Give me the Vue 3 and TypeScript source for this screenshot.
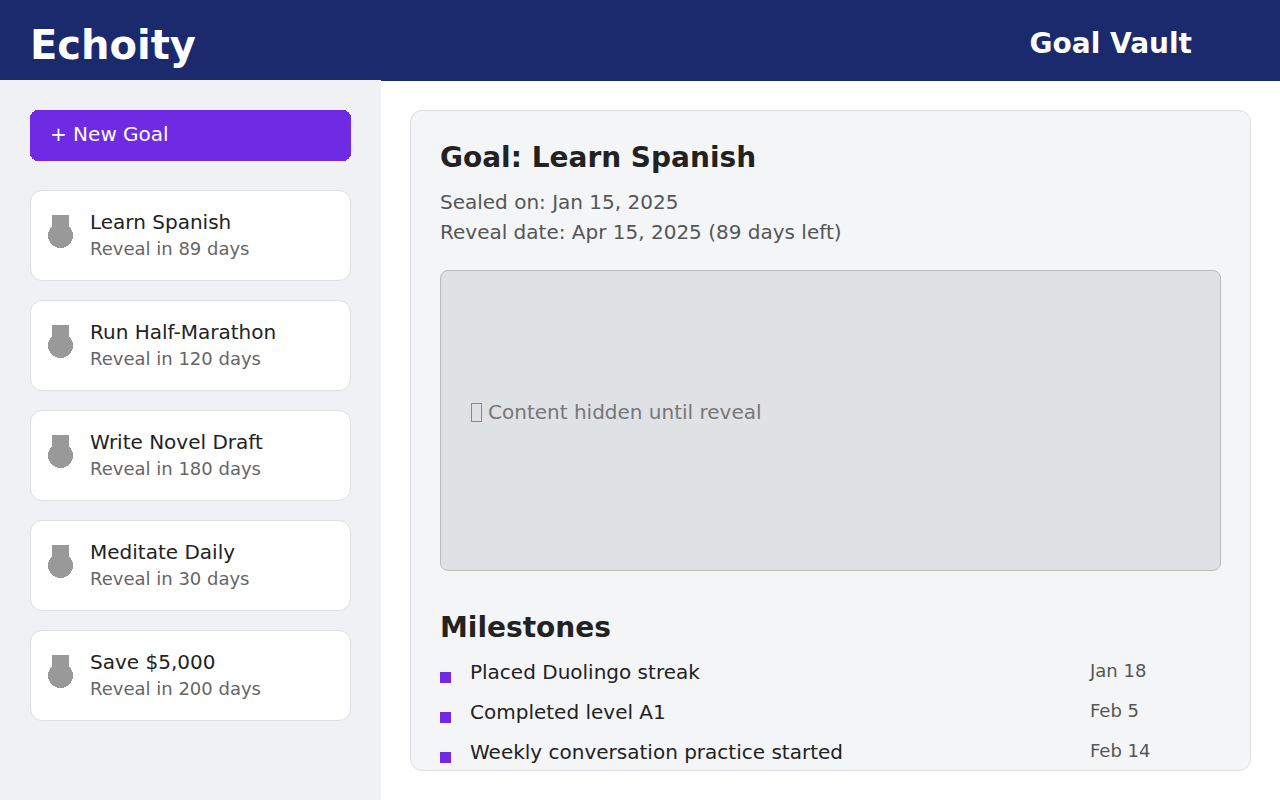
<script setup lang="ts">
interface Goal { name: string; days: number }
interface Milestone { text: string; date: string }
const goals: Goal[] = [
  { name: 'Learn Spanish', days: 89 },
  { name: 'Run Half-Marathon', days: 120 },
  { name: 'Write Novel Draft', days: 180 },
  { name: 'Meditate Daily', days: 30 },
  { name: 'Save $5,000', days: 200 },
]
const milestones: Milestone[] = [
  { text: 'Placed Duolingo streak', date: 'Jan 18' },
  { text: 'Completed level A1', date: 'Feb 5' },
  { text: 'Weekly conversation practice started', date: 'Feb 14' },
]
</script>

<template>
  <div class="app">
    <div class="left">
      <header class="logo-bar">Echoity</header>
      <aside class="sidebar">
        <button class="new-goal">
          <svg class="btn-bg" width="321" height="51" viewBox="0 0 321 51" aria-hidden="true">
            <rect width="321" height="51" rx="8" fill="#6f2ae4" shape-rendering="crispEdges" />
          </svg>
          <span class="btn-label">+ New Goal</span>
        </button>
        <ul class="goals">
          <li v-for="g in goals" :key="g.name" class="goal-card">
            <svg class="medal" width="25" height="33" viewBox="0 0 25 33" aria-hidden="true" shape-rendering="crispEdges">
              <rect x="4" y="0" width="17" height="14" fill="#999" />
              <circle cx="12.5" cy="20.5" r="12.5" fill="#999" />
            </svg>
            <div class="goal-text">
              <div class="goal-name">{{ g.name }}</div>
              <div class="goal-sub">Reveal in {{ g.days }} days</div>
            </div>
          </li>
        </ul>
      </aside>
    </div>
    <div class="right">
      <header class="title-bar"><span class="title">Goal Vault</span></header>
      <main class="main">
        <section class="panel">
          <h1 class="panel-title">Goal: Learn Spanish</h1>
          <p class="meta">Sealed on: Jan 15, 2025</p>
          <p class="meta">Reveal date: Apr 15, 2025 (89 days left)</p>
          <div class="hidden-box"><span class="hidden-text"><i class="tofu"></i>Content hidden until reveal</span></div>
          <h2 class="ms-title">Milestones</h2>
          <ul class="ms-list">
            <li v-for="m in milestones" :key="m.text" class="ms-row">
              <i class="bullet"></i>
              <span class="ms-text">{{ m.text }}</span>
              <span class="ms-date">{{ m.date }}</span>
            </li>
          </ul>
        </section>
      </main>
    </div>
  </div>
</template>

<style>
html, body { margin: 0; padding: 0; background: #fff; }
</style>

<style scoped>
.app {
  display: flex;
  width: 1280px;
  height: 800px;
  overflow: hidden;
  font-family: "DejaVu Sans", sans-serif;
}
.left { width: 381px; flex: none; display: flex; flex-direction: column; }
.logo-bar {
  height: 80px;
  box-sizing: border-box;
  padding-left: 30px;
  background: #1a2a6c;
  color: #fff;
  font-size: 40px;
  font-weight: 700;
  line-height: 90px;
}
.sidebar {
  flex: 1;
  background: #f0f1f5;
  padding: 30px;
}
.new-goal {
  position: relative;
  display: block;
  width: 321px;
  height: 51px;
  border: none;
  background: none;
  color: #fff;
  font: 20px "DejaVu Sans", sans-serif;
  text-align: left;
  padding: 0 20px 3px;
}
.btn-bg { position: absolute; left: 0; top: 0; display: block; }
.btn-label { position: relative; }
.goals { list-style: none; margin: 29px 0 0; padding: 0; display: flex; flex-direction: column; gap: 19px; }
.goal-card {
  height: 91px;
  box-sizing: border-box;
  display: flex;
  align-items: center;
  background: #fff;
  border: 1px solid #dedfe4;
  border-radius: 12px;
  padding-left: 17px;
}
.medal { display: block; flex: none; margin-right: 17px; margin-top: -8px; }
.goal-text { margin-top: -1px; }
.goal-name { font-size: 20px; color: #222; line-height: 25px; margin-bottom: 2px; }
.goal-sub { font-size: 18px; color: #666; line-height: 24px; }
.right { flex: 1; display: flex; flex-direction: column; min-width: 0; }
.title-bar {
  height: 81px;
  background: #1a2a6c;
  display: flex;
  justify-content: flex-end;
  padding-right: 88px;
  flex: none;
}
.title { color: #fff; font-size: 28px; font-weight: 700; line-height: 87px; }
.main { flex: 1; padding: 29px; min-height: 0; }
.panel {
  box-sizing: border-box;
  height: 661px;
  background: #f4f5f7;
  border: 1px solid #dedfe4;
  border-radius: 12px;
  padding: 29px;
  overflow: hidden;
}
.panel-title { margin: 1px 0 12px; font-size: 28px; font-weight: 700; color: #222; line-height: 34px; }
.meta { margin: 0; font-size: 20px; line-height: 30px; color: #555; }
.hidden-box {
  box-sizing: border-box;
  height: 301px;
  margin-top: 23px;
  background: #e0e1e5;
  border: 1px solid #bbb;
  border-radius: 8px;
  padding: 0 29px;
  display: flex;
  align-items: center;
}
.hidden-text { font-size: 20px; color: #777; position: relative; top: -9px; display: flex; align-items: center; }
.tofu { display: block; width: 9px; height: 17px; border: 1px solid #888; margin: 0 6px 0 1px; position: relative; top: 1px; }
.ms-title { margin: 40px 0 10px; font-size: 28px; font-weight: 700; color: #222; line-height: 34px; }
.ms-list { list-style: none; margin: -3px 0 0; padding: 0; }
.ms-row { display: flex; align-items: center; height: 40px; position: relative; }
.bullet { width: 11px; height: 11px; background: #6f2ae4; flex: none; margin-right: 19px; position: relative; top: 5px; }
.ms-text { font-size: 20px; color: #222; flex: 1; }
.ms-date { font-size: 18px; color: #555; width: 131px; flex: none; position: relative; top: -2px; }
</style>
